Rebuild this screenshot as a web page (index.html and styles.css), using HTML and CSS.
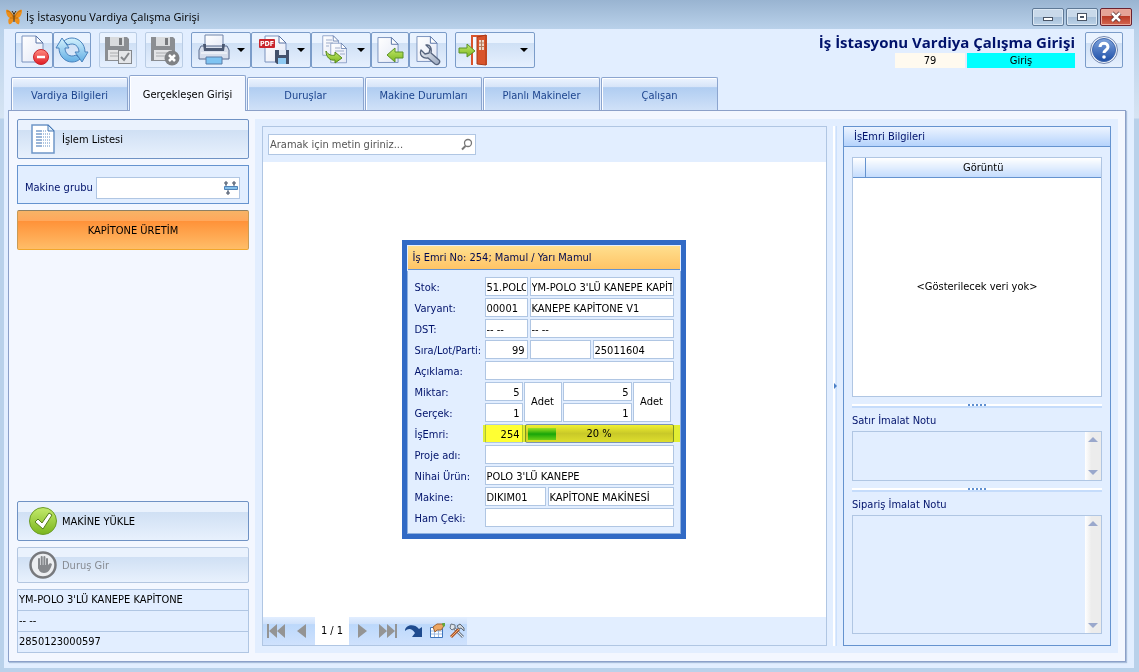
FILE: index.html
```html
<!DOCTYPE html>
<html lang="tr">
<head>
<meta charset="utf-8">
<title>İş İstasyonu Vardiya Çalışma Girişi</title>
<link rel="stylesheet" href="styles.css">
</head>
<body>
<svg width="0" height="0" class="defs" aria-hidden="true">
  <defs>
    <linearGradient id="gPaper" x1="0" y1="0" x2="1" y2="1"><stop offset="0" stop-color="#fff"/><stop offset="1" stop-color="#e3e8f6"/></linearGradient>
    <linearGradient id="gRed" x1="0" y1="0" x2="0" y2="1"><stop offset="0" stop-color="#ff8a80"/><stop offset="1" stop-color="#e01c24"/></linearGradient>
    <linearGradient id="gGreen" x1="0" y1="0" x2="0" y2="1"><stop offset="0" stop-color="#c3ea6c"/><stop offset="1" stop-color="#7ab51d"/></linearGradient>
    <linearGradient id="gBlue" x1="0" y1="0" x2="0" y2="1"><stop offset="0" stop-color="#d4f2fd"/><stop offset="1" stop-color="#62aee4"/></linearGradient>
    <linearGradient id="gHelp" x1="0" y1="0" x2="0" y2="1"><stop offset="0" stop-color="#7fa3dc"/><stop offset="1" stop-color="#1d4fa8"/></linearGradient>
    <linearGradient id="gSteel" x1="0" y1="0" x2="1" y2="1"><stop offset="0" stop-color="#f4f6fa"/><stop offset="1" stop-color="#9aa8bf"/></linearGradient>
    <symbol id="page" viewBox="0 0 24 28"><path d="M1 1h14l7 7v19H1z" fill="url(#gPaper)" stroke="#7a92bd"/><path d="M15 1v7h7z" fill="#fff" stroke="#5873a5"/></symbol>
    <symbol id="floppy" viewBox="0 0 26 26"><path d="M1 1h22l2 2v22H1z" fill="#8b8e92"/><path d="M6 1h14v9H6z" fill="#d9dbdd"/><path d="M15 2h3v7h-3z" fill="#77797c"/><path d="M4 14h18v10H4z" fill="#e3e4e6"/><path d="M6 17h14M6 20h14" stroke="#aaacaf"/></symbol>
  </defs>
</svg>
<div class="window">
  <header class="titlebar">
    <svg class="logo" viewBox="0 0 16 16"><path d="M8 7C6 3 2 0 0 1c0 3 1 7 4 8-2 0-2 4-1 6 2 1 4-2 5-5 1 3 3 6 5 5 1-2 1-6-1-6 3-1 4-5 4-8-2-1-6 2-8 6z" fill="#ee8f1a"/><path d="M1 2c3 0 5 3 6 6M15 2c-3 0-5 3-6 6M4 9l3 0M12 9H9" fill="none" stroke="#a8620f" stroke-width=".7"/><path d="M8 4v9M8 5L6 2M8 5l2-3" stroke="#3b2408" stroke-width="1"/></svg>
    <span class="caption">İş İstasyonu Vardiya Çalışma Girişi</span>
    <div class="sysbuttons">
      <button class="sys" aria-label="Simge durumuna küçült"><svg width="12" height="12"><rect x="1.500" y="6.500" width="9" height="3" fill="#fff" stroke="#4a5566"/></svg></button>
      <button class="sys" aria-label="Önceki boyut"><svg width="12" height="12"><rect x="1.500" y="2.500" width="9" height="7" fill="#fff" stroke="#4a5566"/><rect x="4.500" y="5.500" width="3" height="1" fill="#b9cbe0" stroke="#4a5566"/></svg></button>
      <button class="sys close" aria-label="Kapat"><svg width="14" height="12"><path d="M3 2l8 8M11 2l-8 8" stroke="#5b2b2b" stroke-width="4"/><path d="M3 2l8 8M11 2l-8 8" stroke="#fff" stroke-width="2.500"/></svg></button>
    </div>
  </header>

  <main class="client">
    <div class="toolbar">
      <button class="tool" aria-label="Sil"><svg width="34" height="32"><use href="#page" x="4" y="1" width="24" height="28"/><circle cx="24" cy="23" r="7.500" fill="url(#gRed)" stroke="#c8242c"/><path d="M20 23h8" stroke="#fff" stroke-width="2.500"/></svg></button>
      <button class="tool" aria-label="Yenile"><svg width="34" height="30" fill="url(#gBlue)" stroke="#4a83bd" stroke-linejoin="round"><path d="M4 13c0 8 6 14 13 14 3 0 6-1 8-3l-4-4c-6 3-11-1-11-7h4L7 3 1 13z"/><path d="M30 17c0-8-6-14-13-14-3 0-6 1-8 3l4 4c6-3 11 1 11 7h-4l7 10 6-10z"/></svg></button>
      <button class="tool off gap" aria-label="Kaydet"><svg width="32" height="32"><use href="#floppy" x="2" y="2" width="26" height="26"/><rect x="16.500" y="16.500" width="13" height="13" fill="#e4e6e9" stroke="#85888c"/><path d="M19 23l3 3 5-7" fill="none" stroke="#85888c" stroke-width="2"/></svg></button>
      <button class="tool off gap" aria-label="Kaydetme"><svg width="32" height="32"><use href="#floppy" x="2" y="2" width="26" height="26"/><circle cx="24" cy="24" r="7.500" fill="#808285"/><path d="M21 21l6 6M27 21l-6 6" stroke="#fff" stroke-width="2.500"/></svg></button>
      <button class="tool menu gap" aria-label="Yazdır"><svg width="34" height="34"><path d="M8 2h18v14H8z" fill="url(#gPaper)" stroke="#6f83a8"/><path d="M4 13h26l2 4v9H2v-9z" fill="#d7deec" stroke="#57698c"/><path d="M6 11h3v4h16v-4h3l-1 7H7z" fill="#4b5872"/><path d="M9 24h16v7H9z" fill="#7fc4f2" stroke="#5b7ca8"/><path d="M4 20h26" stroke="#fff"/></svg><i class="caret"></i></button>
      <button class="tool menu" aria-label="PDF kaydet"><svg width="34" height="34"><use href="#page" x="7" y="2" width="24" height="28"/><rect x="2" y="6" width="16" height="9" rx="1" fill="#c9252c"/><text x="3" y="13" class="pdf">PDF</text><path d="M18 17h14v14H20l-2-2z" fill="#44516b"/><path d="M22 17h7v5h-7z" fill="#dfe6f2"/><path d="M21 25h8v6h-8z" fill="#8ec9f2"/></svg><i class="caret"></i></button>
      <button class="tool menu" aria-label="Kopyala"><svg width="34" height="34"><use href="#page" x="5" y="1" width="18" height="23"/><use href="#page" x="13" y="9" width="18" height="22"/><path d="M9 7h6M9 10h7M9 13h3M18 15h5M18 18h9M23 21h5" stroke="#9fadc9"/><path d="M9 18c2 4 6 5 9 4v-3l7 6-7 5v-3c-5 1-9-3-9-9z" fill="url(#gGreen)" stroke="#55891b"/></svg><i class="caret"></i></button>
      <button class="tool" aria-label="İçe aktar"><svg width="32" height="32"><use href="#page" x="3" y="2" width="23" height="28"/><path d="M13 21l8-7v4h8v6h-8v4z" fill="url(#gGreen)" stroke="#5b9228"/></svg></button>
      <button class="tool" aria-label="Ayarlar"><svg width="32" height="32"><use href="#page" x="4" y="1" width="23" height="28"/><path d="M14 11l4 4-1 4-4 1-4-4c-2 5 2 9 7 8l7 6c3 2 6-2 4-4l-8-7c1-5-1-9-5-8z" fill="url(#gSteel)" stroke="#55637d" stroke-width="1.300" stroke-linejoin="round"/></svg></button>
      <button class="tool menu exit gap" aria-label="Çıkış"><svg width="34" height="34"><path d="M16 32V3h14v29" fill="#f4f8ff" stroke="#d9542b" stroke-width="2"/><path d="M21 4l9-2v30l-9-1z" fill="#d9542b" stroke="#a83a18"/><path d="M23 7h5v10h-5z" fill="#eed8c8"/><path d="M25.500 7v10M23 10h5M23 13.500h5" stroke="#b37a5c"/><path d="M3 15h8v-4l8 7-8 6v-4H3z" fill="url(#gGreen)" stroke="#5b9228"/></svg><i class="caret"></i></button>

      <div class="heading">
        <h1 class="screen-name">İş İstasyonu Vardiya Çalışma Girişi</h1>
        <div class="state"><span class="number">79</span><span class="mode">Giriş</span></div>
      </div>
      <button class="tool help" aria-label="Yardım"><svg width="32" height="32"><circle cx="16" cy="16" r="13.500" fill="#f3f6fb" stroke="#7186b0"/><circle cx="16" cy="16" r="11.500" fill="url(#gHelp)" stroke="#3f67ad"/><path d="M12 13c0-5 8-5 8 0 0 3-4 3-4 6" fill="none" stroke="#fff" stroke-width="3"/><circle cx="16" cy="23" r="1.800" fill="#fff"/></svg></button>
    </div>

    <nav class="tabs">
      <button class="tab">Vardiya Bilgileri</button>
      <button class="tab active">Gerçekleşen Girişi</button>
      <button class="tab">Duruşlar</button>
      <button class="tab">Makine Durumları</button>
      <button class="tab">Planlı Makineler</button>
      <button class="tab">Çalışan</button>
    </nav>

    <div class="sheet">
      <aside class="side">
        <button class="action"><svg width="32" height="32"><path d="M5 2h16l6 6v22H5z" fill="#fff" stroke="#6f97c8" stroke-width="1.500"/><path d="M21 2v6h6z" fill="#dcecfb" stroke="#4779b5"/><path d="M9 8h6M9 11h6M9 14h6M9 17h6M9 20h6M9 23h6" stroke="#7b9fcc" stroke-width="1.500"/><path d="M16 8h4M16 11h8M16 14h8M16 17h8M16 20h8M16 23h8" stroke="#5f8dc4" stroke-dasharray="1 1"/></svg>İşlem Listesi</button>
        <div class="group">
          <label for="mg">Makine grubu</label>
          <div class="picker"><input id="mg" type="text"><button class="pick" aria-label="Seç"><svg width="14" height="14"><path d="M2 3v2M10 3v2M4 9v2" stroke="#4e6078"/><path d="M.5 5.500h13v3H.5z" fill="#86c0ea" stroke="#4f82b8"/><path d="M1 1h2v2H1zM9 1h2v2H9zM3 11h2v2H3z" fill="#fff" stroke="#3c4a60"/></svg></button></div>
        </div>
        <button class="action orange">KAPİTONE ÜRETİM</button>
        <div class="fill"></div>
        <button class="action"><svg width="32" height="32"><circle cx="16" cy="16" r="13.500" fill="url(#gGreen)" stroke="#6c9c27"/><path d="M8 17l3-3 4 4 7-10 3 2-9 14z" fill="#fff" stroke="#557c1c"/></svg>MAKİNE YÜKLE</button>
        <button class="action short" disabled><svg width="32" height="32"><circle cx="16" cy="16" r="12.500" fill="#eceef1" stroke="#77797d" stroke-width="2.500"/><path d="M12 10v9M14.700 8v10M17.400 8v10M20 10v9" stroke="#85888c" stroke-width="2" stroke-linecap="round"/><path d="M11 16h10l2-2 2 1c-1 4-3 9-8 9-4 0-6-3-6-8z" fill="#85888c"/></svg>Duruş Gir</button>
        <ul class="info"><li>YM-POLO 3'LÜ KANEPE KAPİTONE</li><li>-- --</li><li>2850123000597</li></ul>
      </aside>

      <div class="work">
        <section class="viewer">
          <div class="searchrow"><div class="search"><input type="text" placeholder="Aramak için metin giriniz..." aria-label="Ara"><svg width="14" height="14"><circle cx="8" cy="5" r="3.500" fill="#fff" stroke="#777" stroke-width="1.300"/><path d="M5.500 8L2 11.500" stroke="#777" stroke-width="2"/></svg></div></div>
          <div class="canvas">
            <article class="card">
              <h2 class="card-title">İş Emri No: 254; Mamul / Yarı Mamul</h2>
              <div class="form">
                <label for="f1">Stok:</label><div class="line two"><input id="f1" value="51.POLO" readonly><input aria-label="Stok adı" value="YM-POLO 3'LÜ KANEPE KAPİTONE" readonly></div>
                <label for="f2">Varyant:</label><div class="line two"><input id="f2" value="00001" readonly><input aria-label="Varyant adı" value="KANEPE KAPİTONE V1" readonly></div>
                <label for="f3">DST:</label><div class="line two"><input id="f3" value="-- --" readonly><input aria-label="DST adı" value="-- --" readonly></div>
                <label for="f4">Sıra/Lot/Parti:</label><div class="line three"><input id="f4" class="num" value="99" readonly><input aria-label="Lot" readonly><input aria-label="Parti" value="25011604" readonly></div>
                <label for="f5">Açıklama:</label><div class="line"><input id="f5" readonly></div>
                <label for="f6">Miktar:</label>
                <div class="amounts"><input id="f6" class="num" value="5" readonly><output class="unit">Adet</output><input aria-label="Miktar 2" class="num" value="5" readonly><output class="unit">Adet</output><input id="f7" class="num" value="1" readonly><input aria-label="Gerçek 2" class="num" value="1" readonly></div>
                <label for="f7">Gerçek:</label>
                <label for="f8">İşEmri:</label><div class="line order"><input id="f8" class="num" value="254" readonly><div class="progress" role="progressbar" aria-valuenow="20"><span class="bar"></span><span class="pct">20 %</span></div></div>
                <label for="f9">Proje adı:</label><div class="line"><input id="f9" readonly></div>
                <label for="f10">Nihai Ürün:</label><div class="line"><input id="f10" value="POLO 3'LÜ KANEPE" readonly></div>
                <label for="f11">Makine:</label><div class="line machine"><input id="f11" value="DIKIM01" readonly><input aria-label="Makine adı" value="KAPİTONE MAKİNESİ" readonly></div>
                <label for="f12">Ham Çeki:</label><div class="line"><input id="f12" readonly></div>
              </div>
            </article>
          </div>
          <div class="pager">
            <button class="nav" aria-label="İlk"><svg width="20" height="16"><path d="M1 1h2v14H1zM11 1v14L3 8zM19 1v14l-8-7z" fill="#949494"/></svg></button>
            <button class="nav" aria-label="Önceki"><svg width="12" height="16"><path d="M10 1v14L1 8z" fill="#949494"/></svg></button>
            <span class="pageno">1 / 1</span>
            <button class="nav" aria-label="Sonraki"><svg width="12" height="16"><path d="M2 1v14l9-7z" fill="#949494"/></svg></button>
            <button class="nav" aria-label="Son"><svg width="20" height="16"><path d="M19 1h-2v14h2zM9 1v14l8-7zM1 1v14l8-7z" fill="#949494"/></svg></button>
            <button class="nav" aria-label="Yenile"><svg width="20" height="16"><path d="M1 7c1-5 9-7 14-1l3-2v10H8l3-4C8 5 4 5 1 8z" fill="#1f4b8f"/></svg></button>
            <button class="nav" aria-label="Özelleştir"><svg width="16" height="16"><path d="M1.500 4.500h12v10h-12z" fill="#fff" stroke="#3f76bd"/><path d="M2 8h11M2 11h11M5.500 5v9M9.500 5v9" stroke="#9dbbe2"/><path d="M4 4l4-3h5l2 2-3 4H8L6 9z" fill="#eda763" stroke="#9f6230"/><path d="M13 0l3 0v3l-2 1z" fill="#61a83d"/></svg></button>
            <button class="nav" aria-label="Araçlar"><svg width="16" height="16"><path d="M3 3l11 11" stroke="#7c8796" stroke-width="3"/><path d="M3 3l11 11" stroke="#e4e9f0"/><path d="M1 5l1-4 4 1 0 3-3 2z" fill="#dfe5ec" stroke="#6b7480"/><path d="M2 14l8-8" stroke="#a9572b" stroke-width="3"/><path d="M2 14l8-8" stroke="#f5ac70"/><path d="M8 3l3-2 4 4v3l-3-3-2 1z" fill="#cfd6df" stroke="#5e6875"/></svg></button>
          </div>
        </section>

        <div class="vsplit"><i></i></div>

        <section class="details">
          <h2 class="details-title">İşEmri Bilgileri</h2>
          <div class="details-body">
            <div class="gridbox">
              <table class="grid"><thead><tr><th class="ind"></th><th>Görüntü</th></tr></thead></table>
              <p class="empty">&lt;Gösterilecek veri yok&gt;</p>
            </div>
            <div class="hsplit"><i></i></div>
            <label class="note-label" for="n1">Satır İmalat Notu</label>
            <div class="note small"><textarea id="n1" readonly></textarea><div class="scroll"><i class="up"></i><i class="down"></i></div></div>
            <div class="hsplit"><i></i></div>
            <label class="note-label" for="n2">Sipariş İmalat Notu</label>
            <div class="note big"><textarea id="n2" readonly></textarea><div class="scroll"><i class="up"></i><i class="down"></i></div></div>
          </div>
        </section>
      </div>
    </div>
  </main>
</div>
</body>
</html>
```
FILE: styles.css
```css
* { box-sizing: border-box; }
body {
  margin: 0;
  font: 11px/13px "DejaVu Sans Condensed", "DejaVu Sans", sans-serif;
  color: #000;
}
button, input, textarea { font: inherit; color: inherit; margin: 0; padding: 0; outline: 0; border: 0; }
input { min-width: 0; width: 100%; }
h1, h2, p, ul { margin: 0; padding: 0; font-weight: normal; }
.defs { position: absolute; }

.window { min-height: 100vh; display: flex; flex-direction: column; padding: 0 5px 4px 4px; background: linear-gradient(#99b4d1, #b9d1ea 29px, #d6e4f3 118px, #b9d1ea 119px); }
.titlebar { height: 29px; display: flex; align-items: center; padding: 4px 2px 0 2px; }
.logo { width: 16px; height: 16px; margin-right: 4px; }
.caption { font: 11px/16px "Open Sans", "Noto Sans", sans-serif; }
.sysbuttons { margin-left: auto; display: flex; gap: 2px; }
.sys { width: 32px; height: 18px; display: grid; place-items: center; border: 1px solid #5f7996; border-radius: 2px; background: linear-gradient(#c9d9ea 50%, #a5bed8 50%, #bdd3e8); box-shadow: inset 0 0 0 1px #dce8f4; }
.close { border-color: #6b2230; background: linear-gradient(#e5a397 45%, #b93a26 45%, #d4664f); box-shadow: inset 0 0 0 1px #eba99b; }

.client { flex: 1; display: flex; flex-direction: column; background: #e2eeff; padding: 3px 8px 6px 4px; }
.toolbar { display: flex; height: 36px; padding: 0 3px 0 7px; }
.tool { width: 38px; height: 36px; flex: none; display: flex; align-items: center; justify-content: center; border: 1px solid #7b9cc9; border-radius: 2px; background: linear-gradient(#eaf3ff 28%, #cfe0f5 30%, #e6f0fe); }
.tool.off { border-color: #bacde5; }
.tool.gap { margin-left: 8px; }
.tool.menu { width: 60px; gap: 6px; }
.tool.exit { width: 80px; gap: 30px; padding-right: 6px; }
.caret { width: 0; height: 0; border: 4px solid transparent; border-top-color: #000; border-bottom: 0; }
.pdf { font: bold 7px "DejaVu Sans Condensed", sans-serif; fill: #fff; }
.heading { margin-left: auto; display: flex; flex-direction: column; align-items: flex-end; }
.screen-name { font: bold 15px/21px "Open Sans", "Noto Sans", sans-serif; color: #00126b; white-space: nowrap; }
.state { display: flex; gap: 2px; text-align: center; line-height: 15px; }
.number { width: 70px; background: #fffaef; }
.mode { width: 108px; background: #0ff; }
.tool.help { margin-left: 10px; }

.tabs { display: flex; align-items: flex-end; gap: 1px; height: 36px; margin: 7px 0 -1px 3px; }
.tab { width: 117px; height: 33px; margin-bottom: 1px; padding-top: 2px; border: 1px solid #8ca5cf; border-bottom: 0; border-radius: 2px 2px 0 0; color: #1c448e; background: linear-gradient(#edf4ff, #d6e4f8 28%, #b0cdf1 30%, #d0e1f8); box-shadow: inset 1px 1px #fff; }
.tab.active { height: 36px; margin-bottom: 0; color: #000; background: #f3f7ff; position: relative; }

.sheet { flex: 1; display: flex; gap: 6px; padding: 8px 7px 8px 8px; border: 1px solid #8ca0c8; background: #f3f7ff; box-shadow: 1px 1px 1px #a9bedb; }
.side { width: 232px; flex: none; display: flex; flex-direction: column; gap: 6px; }
.action { height: 40px; flex: none; display: flex; align-items: center; gap: 3px; padding-left: 9px; border: 1px solid #6f92c4; border-radius: 2px; background: linear-gradient(#eaf2fd 25%, #d0e0f4 27%, #e8f1fd); }
.action.short { height: 36px; }
.action:disabled { border-color: #b3c6e0; color: #878b92; }
.orange { justify-content: center; padding: 0; border-color: #8d8064 #c99b55 #f1a62c; background: linear-gradient(#f7b366, #ffa85c 25%, #ff9239 27%, #ffbd68); }
.group { height: 39px; display: flex; align-items: center; gap: 3px; padding: 6px 8px 0 7px; border: 1px solid #6593cf; background: #e2eeff; color: #00126b; }
.group label { white-space: nowrap; }
.picker { flex: 1; display: flex; align-items: center; height: 22px; border: 1px solid #b0c6e3; background: #fff; }
.pick { width: 18px; background: none; display: grid; place-items: center; }
.fill { flex: 1; }
.info { list-style: none; border: 1px solid #b0c6e3; border-top: 0; background: #e2eeff; }
.info li { padding: 3px 1px; height: 21px; line-height: 14px; border-top: 1px solid #b0c6e3; }

.work { flex: 1; display: flex; padding: 7px; background: #e2eeff; }
.viewer { flex: 1; display: flex; flex-direction: column; border: 1px solid #b0c6e3; }
.searchrow { padding: 7px 5px; }
.search { width: 208px; height: 21px; display: flex; align-items: center; padding: 0 2px 0 1px; border: 1px solid #b0c6e3; background: #fff; }
.search input::placeholder { color: #555; opacity: 1; }
.canvas { flex: 1; display: grid; place-items: center; padding-right: 2px; background: #fff; }
.pager { display: flex; align-self: flex-start; align-items: center; height: 28px; background: linear-gradient(#e2eeff, #cfe1fb 25%, #bcd8fb 27%, #cfe2fd); }
.nav { display: grid; place-items: center; width: 26px; height: 28px; background: none; }
.nav:nth-last-child(-n+2) { width: 20px; }
.pageno { width: 34px; height: 28px; text-align: center; line-height: 28px; background: #fff; }

.card { width: 284px; border: 5px solid #316ac5; background: #e2eeff; color: #00126b; }
.card-title { font-size: 11px; line-height: 22px; margin: 1px; padding: 1px 0 0 5px; color: #000a50; background: linear-gradient(#ffdf8e, #ffc466); border-bottom: 1px solid #6593cf; }
.form { display: grid; grid-template-columns: 70px 1fr; grid-auto-rows: 19px; row-gap: 2px; align-items: center; padding: 6px 6px 6px 7px; border: 1px solid #8fb1e0; border-top: 0; }
.form label { white-space: nowrap; padding-top: 1px; }
.line { display: grid; gap: 2px; }
.two { grid-template-columns: 43px 1fr; }
.three { grid-template-columns: 43px 61px 1fr; }
.machine { grid-template-columns: 61px 1fr; }
.order { grid-template-columns: 38px 1fr; position: relative; }
.order::after { content: ""; position: absolute; inset: 1px -6px 1px -2px; background: #ff3; mix-blend-mode: multiply; }
.form input, .unit { height: 19px; padding: 1px 1px 0; border: 1px solid #b0c6e3; background: #fff; color: #000; }
.form .num { text-align: right; padding-right: 2px; }
.amounts { grid-row: span 2; align-self: start; display: grid; grid-template-columns: 38px 38px 69px 38px; gap: 2px 1px; }
.form .unit { grid-row: span 2; height: 40px; text-align: center; line-height: 38px; padding: 0; }
.progress { display: flex; align-items: center; position: relative; padding: 2px; border: 1px solid #7d93b3; border-radius: 2px; color: #000; background: linear-gradient(#f0f0f0, #c9c9c9 50%, #dedede); }
.bar { width: 20%; height: 12px; background: linear-gradient(#9ce0a0, #18a52c 50%, #6bd070); }
.pct { position: absolute; inset: 2px 0; text-align: center; }

.vsplit { width: 16px; display: flex; align-items: center; padding-left: 6px; }
.vsplit::before { content: ""; width: 4px; height: 100%; background: linear-gradient(90deg, #fff 50%, #e2eeff 50%, #c5dcfb); }
.vsplit i { margin-left: -3px; border: 3px solid transparent; border-left-color: #4b7fc6; border-right: 0; }
.details { width: 268px; flex: none; display: flex; flex-direction: column; border: 1px solid #6593cf; }
.details-title { font-size: 11px; line-height: 18px; height: 20px; padding: 1px 0 0 10px; color: #00126b; border-bottom: 1px solid #6593cf; background: linear-gradient(#edf4ff, #b5d3fc); }
.details-body { flex: 1; display: flex; flex-direction: column; padding: 10px 8px 11px; }
.gridbox { flex: 1; display: flex; flex-direction: column; border: 1px solid #b0c6e3; background: #fff; }
.grid { width: 100%; border-collapse: collapse; }
.grid th { height: 19px; padding: 0; font-weight: normal; border-bottom: 1px solid #6593cf; background: linear-gradient(#fff, #c4dcfd); }
.grid .ind { width: 12px; border-right: 1px solid #6593cf; }
.empty { flex: 1; display: grid; place-items: center; }
.hsplit { height: 4px; margin: 7px 0 6px; display: flex; justify-content: center; background: linear-gradient(#fff 50%, #c5dcfb 50%); }
.hsplit i { width: 19px; height: 2px; background: repeating-linear-gradient(90deg, #5f8fd0 0 2px, #fff 2px 4px); }
.note-label { height: 14px; margin-bottom: 3px; color: #00126b; }
.note { display: flex; border: 1px solid #b0c6e3; }
.note.small { height: 50px; }
.note.big { height: 119px; }
.note textarea { flex: 1; min-width: 0; resize: none; background: none; }
.scroll { width: 16px; display: flex; flex-direction: column; justify-content: space-between; align-items: center; padding: 5px 0; background: linear-gradient(90deg, #fff, #ececec 40%); }
.up, .down { border: 5px solid transparent; }
.up { border-bottom-color: #9aa8cc; border-top: 0; }
.down { border-top-color: #9aa8cc; border-bottom: 0; }
```
